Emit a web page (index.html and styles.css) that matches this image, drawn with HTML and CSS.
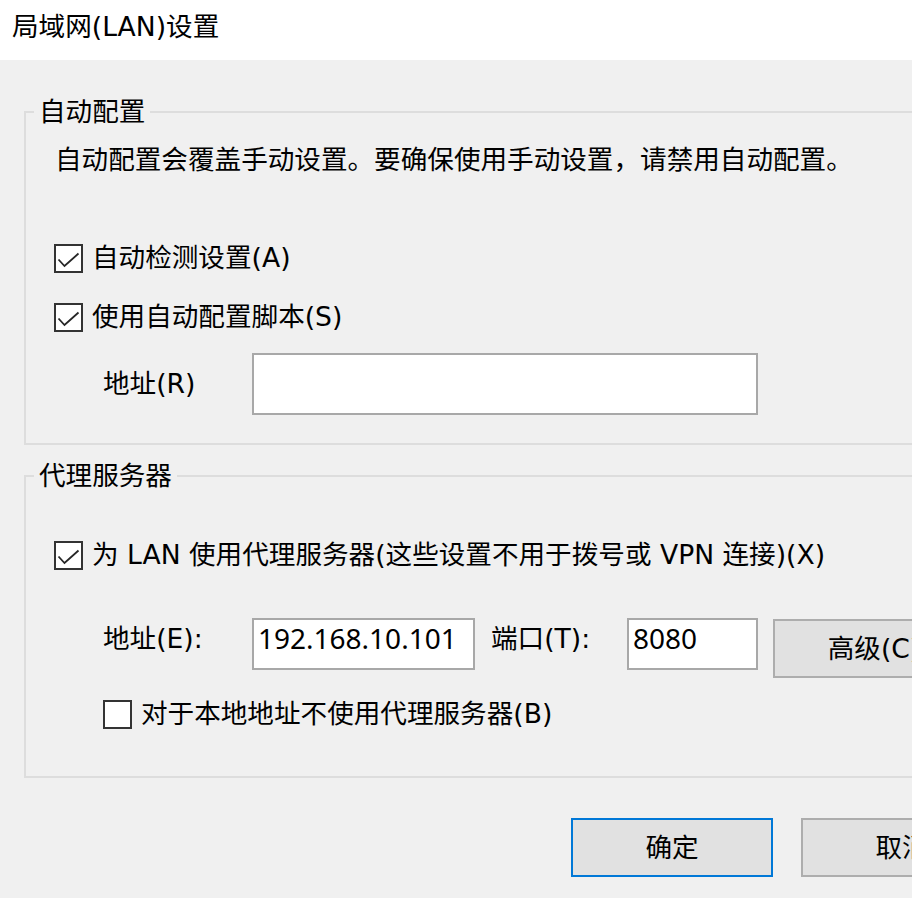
FILE: index.html
```html
<!DOCTYPE html>
<html lang="zh-CN">
<head>
<meta charset="utf-8">
<title>局域网(LAN)设置</title>
<link rel="stylesheet" href="styles.css">
</head>
<body>
<div class="titlebar">局域网(LAN)设置</div>
<div class="dialog">
  <fieldset class="group group-auto">
    <legend>自动配置</legend>
    <div class="group-body">
      <p class="desc">自动配置会覆盖手动设置。要确保使用手动设置，请禁用自动配置。</p>
      <div class="check row-detect">
        <span class="box"><svg viewBox="0 0 25 25"><polyline points="2.5,13.5 8.5,20 22.5,7.5"/></svg></span>
        <span>自动检测设置(A)</span>
      </div>
      <div class="check row-script">
        <span class="box"><svg viewBox="0 0 25 25"><polyline points="2.5,13.5 8.5,20 22.5,7.5"/></svg></span>
        <span>使用自动配置脚本(S)</span>
      </div>
      <div class="script-addr">
        <span class="field-label">地址(R)</span>
        <div class="textbox wide"></div>
      </div>
    </div>
  </fieldset>

  <fieldset class="group group-proxy">
    <legend>代理服务器</legend>
    <div class="group-body">
      <div class="check row-proxy">
        <span class="box"><svg viewBox="0 0 25 25"><polyline points="2.5,13.5 8.5,20 22.5,7.5"/></svg></span>
        <span>为 LAN 使用代理服务器(这些设置不用于拨号或 VPN 连接)(X)</span>
      </div>
      <div class="proxy-row">
        <span class="field-label addr-label">地址(E):</span>
        <div class="textbox ip">192.168.10.101</div>
        <span class="field-label port-label">端口(T):</span>
        <div class="textbox port">8080</div>
        <button class="btn advanced">高级(C)</button>
      </div>
      <div class="check row-bypass">
        <span class="box"></span>
        <span>对于本地地址不使用代理服务器(B)</span>
      </div>
    </div>
  </fieldset>

  <div class="actions">
    <button class="btn primary">确定</button>
    <button class="btn">取消</button>
  </div>
</div>
</body>
</html>
```

FILE: styles.css
```css
html, body {
  margin: 0;
  padding: 0;
  overflow: hidden;
}

body {
  background: #f0f0f0;
  color: #000;
  font-family: "DejaVu Sans", "Noto Sans CJK SC", sans-serif;
  font-size: 26.6px;
  line-height: 32px;
}

.titlebar {
  height: 60px;
  line-height: 54px;
  padding-left: 12px;
  background: #ffffff;
  white-space: nowrap;
}

.dialog {
  width: 979px;
  padding-left: 24px;
}

.group {
  margin: 0;
  border: 2px solid #dddddd;
  padding: 0 0 0 8px;
  min-width: 0;
}

.group legend {
  padding: 0 5px;
  line-height: 32px;
}

.group-auto {
  margin-top: 36px;
  padding-bottom: 28px;
}

.group-proxy {
  margin-top: 15px;
  padding-bottom: 46px;
}

.group-body {
  padding-left: 20px;
}

.desc {
  margin: 16px 0 0 1px;
  white-space: nowrap;
}

.check {
  display: flex;
  align-items: center;
  gap: 9px;
  height: 32px;
  white-space: nowrap;
}

.box {
  box-sizing: border-box;
  width: 29px;
  height: 29px;
  border: 2px solid #333333;
  background: #ffffff;
  display: flex;
  flex: none;
}

.box svg {
  width: 25px;
  height: 25px;
}

.box polyline {
  fill: none;
  stroke: #262626;
  stroke-width: 1.8;
}

.row-detect { margin-top: 66px; }
.row-script { margin-top: 27px; }
.row-proxy { margin-top: 47px; }
.row-bypass { margin-top: 20px; padding-left: 49px; }

.script-addr {
  display: flex;
  align-items: center;
  margin-top: 20px;
  padding-left: 49px;
}

.field-label {
  flex: none;
  white-space: nowrap;
}

.script-addr .field-label {
  width: 149px;
}

.textbox {
  box-sizing: border-box;
  background: #ffffff;
  border: 2px solid #a8a8a8;
  padding: 2px 4px;
  white-space: nowrap;
  flex: none;
  font-family: "Noto Sans", sans-serif;
  font-size: 28px;
  line-height: 32px;
}

.textbox.wide {
  width: 506px;
  height: 62px;
}

.proxy-row {
  display: flex;
  align-items: flex-start;
  margin-top: 47px;
  padding-left: 49px;
}

.addr-label {
  width: 149px;
  margin-top: 5px;
}

.textbox.ip {
  width: 223px;
  height: 52px;
}

.port-label {
  width: 136px;
  margin-left: 16px;
  margin-top: 5px;
}

.textbox.port {
  width: 131px;
  height: 52px;
}

.btn {
  box-sizing: border-box;
  width: 202px;
  height: 59px;
  background: #e1e1e1;
  border: 2px solid #adadad;
  border-radius: 0;
  font: inherit;
  color: #000;
  padding: 0;
  flex: none;
  white-space: nowrap;
}

.btn.primary {
  border-color: #0078d7;
}

.advanced {
  margin-left: 15px;
  margin-top: 1px;
}

.actions {
  display: flex;
  justify-content: flex-end;
  gap: 28px;
  margin-top: 40px;
}
```
